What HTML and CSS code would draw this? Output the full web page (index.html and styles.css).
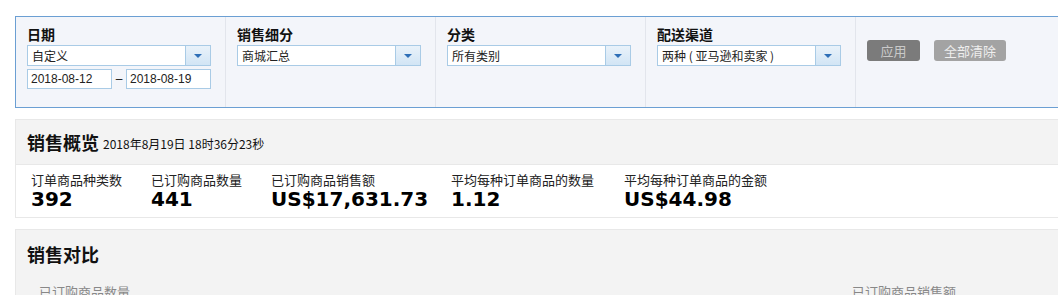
FILE: index.html
```html
<!DOCTYPE html>
<html lang="zh-CN">
<head>
    <meta charset="UTF-8" />
    <title>销售概览</title>
    <link rel="stylesheet" href="styles.css">
</head>
<body>
    <div class="filter-bar">
        <div class="filter-col">
            <div class="filter-label">日期</div>
            <div class="select">
                <span class="select-text">自定义</span>
                <span class="select-btn"><i class="arrow"></i></span>
            </div>
            <div class="date-row">
                <span class="date-input">2018-08-12</span>
                <span class="date-dash">–</span>
                <span class="date-input">2018-08-19</span>
            </div>
        </div>
        <div class="filter-col">
            <div class="filter-label">销售细分</div>
            <div class="select">
                <span class="select-text">商城汇总</span>
                <span class="select-btn"><i class="arrow"></i></span>
            </div>
        </div>
        <div class="filter-col">
            <div class="filter-label">分类</div>
            <div class="select">
                <span class="select-text">所有类别</span>
                <span class="select-btn"><i class="arrow"></i></span>
            </div>
        </div>
        <div class="filter-col">
            <div class="filter-label">配送渠道</div>
            <div class="select">
                <span class="select-text">两种 ( 亚马逊和卖家 )</span>
                <span class="select-btn"><i class="arrow"></i></span>
            </div>
        </div>
        <div class="filter-actions">
            <button class="btn btn-apply">应用</button>
            <button class="btn btn-clear">全部清除</button>
        </div>
    </div>

    <div class="panel">
        <div class="panel-head">
            <span class="panel-title">销售概览</span>
            <span class="panel-time">2018年8月19日 18时36分23秒</span>
        </div>
        <div class="metrics">
            <div class="metric m1">
                <div class="metric-label">订单商品种类数</div>
                <div class="metric-value">392</div>
            </div>
            <div class="metric m2">
                <div class="metric-label">已订购商品数量</div>
                <div class="metric-value">441</div>
            </div>
            <div class="metric m3">
                <div class="metric-label">已订购商品销售额</div>
                <div class="metric-value">US$17,631.73</div>
            </div>
            <div class="metric m4">
                <div class="metric-label">平均每种订单商品的数量</div>
                <div class="metric-value">1.12</div>
            </div>
            <div class="metric m5">
                <div class="metric-label">平均每种订单商品的金额</div>
                <div class="metric-value">US$44.98</div>
            </div>
        </div>
    </div>

    <div class="panel compare">
        <div class="compare-title">销售对比</div>
        <div class="compare-legends">
            <span>已订购商品数量</span>
            <span class="legend-right">已订购商品销售额</span>
        </div>
    </div>
</body>
</html>
```

FILE: styles.css
```css
* {
    margin: 0;
    padding: 0;
    box-sizing: border-box;
}

body {
    width: 1058px;
    height: 295px;
    overflow: hidden;
    background: #fff;
    font-family: "Noto Sans CJK SC", "Liberation Sans", sans-serif;
    color: #111;
}

/* 筛选栏 */
.filter-bar {
    display: flex;
    width: 1080px;
    height: 92px;
    margin: 16px 0 0 15px;
    background: #f3f5fa;
    border: 1px solid #6b9fd3;
    border-right: none;
}

.filter-col {
    width: 210px;
    padding: 6px 0 0 11px;
    border-right: 1px solid #e2e5ec;
}

.filter-label {
    font-size: 14px;
    font-weight: bold;
    line-height: 22px;
    height: 22px;
}

.select {
    display: flex;
    width: 184px;
    height: 21px;
}

.select-text {
    flex: 1;
    background: #fff;
    border: 1px solid #a9cbe6;
    border-right: none;
    font-size: 12px;
    line-height: 19px;
    padding-left: 4px;
    color: #222;
    white-space: nowrap;
    overflow: hidden;
}

.select-btn {
    width: 26px;
    border: 1px solid #a9cbe6;
    background: linear-gradient(#e9f2fa, #d2e5f5);
    display: flex;
    justify-content: center;
    align-items: center;
}

.arrow {
    width: 0;
    height: 0;
    border-left: 4px solid transparent;
    border-right: 4px solid transparent;
    border-top: 4px solid #2e6fb7;
}

.date-row {
    display: flex;
    align-items: center;
    margin-top: 3px;
    width: 184px;
}

.date-input {
    width: 85px;
    height: 20px;
    background: #fff;
    border: 1px solid #a9cbe6;
    font-family: "Liberation Sans", sans-serif;
    font-size: 12px;
    line-height: 18px;
    padding-left: 3px;
    color: #222;
}

.date-dash {
    width: 14px;
    text-align: center;
    font-family: "Liberation Sans", sans-serif;
    font-size: 12px;
    line-height: 20px;
}

.filter-actions {
    display: flex;
    align-items: flex-start;
    gap: 14px;
    padding: 23px 0 0 11px;
}

.btn {
    height: 21px;
    border: none;
    border-radius: 3px;
    font-family: "Noto Sans CJK SC", sans-serif;
    font-size: 13px;
    line-height: 21px;
    padding: 0 9px;
}

.btn-apply {
    width: 53px;
    background: #7b7b7b;
    color: #c9c9c9;
}

.btn-clear {
    width: 72px;
    background: #a3a3a3;
    color: #eee;
}

/* 销售概览 */
.panel {
    width: 1080px;
    margin: 11px 0 0 15px;
    border: 1px solid #e8e8e8;
    border-right: none;
}

.panel-head {
    height: 45px;
    background: #f3f3f3;
    padding-left: 11px;
    display: flex;
    align-items: center;
    gap: 4px;
    border-bottom: 1px solid #e8e8e8;
}

.panel-title {
    font-size: 18px;
    font-weight: bold;
}

.panel-time {
    font-size: 12px;
    padding-top: 3px;
}

.metrics {
    display: flex;
    height: 52px;
    padding: 6px 0 0 15px;
}

.metric {
    width: 120px;
    white-space: nowrap;
}

.m3 {
    width: 180px;
}

.m4 {
    width: 173px;
}

.m5 {
    width: auto;
}

.metric-label {
    font-size: 13px;
    line-height: 17px;
    color: #222;
}

.metric-value {
    font-family: "DejaVu Sans", Verdana, sans-serif;
    font-weight: bold;
    font-size: 20px;
    line-height: 22px;
    color: #000;
}

/* 销售对比 */
.compare {
    height: 70px;
    margin-top: 11px;
    background: #f3f3f3;
}

.compare-title {
    font-size: 18px;
    font-weight: bold;
    padding: 11px 0 0 11px;
    line-height: 26px;
}

.compare-legends {
    display: flex;
    padding: 16px 0 0 23px;
    font-size: 13px;
    line-height: 18px;
    color: #888;
}

.legend-right {
    margin-left: 722px;
}
```
